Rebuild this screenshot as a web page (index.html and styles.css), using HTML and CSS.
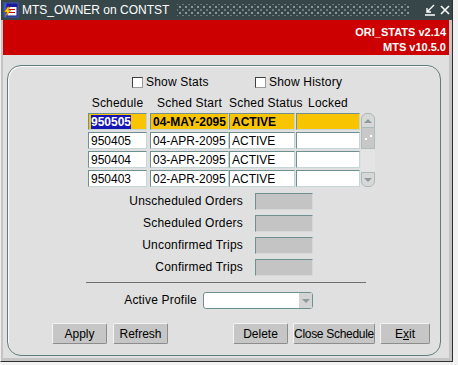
FILE: index.html
```html
<!DOCTYPE html>
<html>
<head>
<meta charset="utf-8">
<link rel="stylesheet" href="styles.css">
</head>
<body>

<div class="window">
  <!-- title bar -->
  <div class="titlebar">
    <svg class="app-icon" width="16" height="16" viewBox="0 0 16 16">
      <rect x="0.5" y="0.5" width="15" height="15" fill="#3b59c8"/>
      <rect x="4" y="2" width="10" height="12" fill="#f4f4f4" stroke="#1a1a80" stroke-width="1"/>
      <rect x="4" y="2" width="10" height="3" fill="#1a1a9a"/>
      <line x1="6" y1="7.5" x2="12" y2="7.5" stroke="#c00000"/>
      <line x1="6" y1="10.5" x2="12" y2="10.5" stroke="#c00000"/>
      <polygon points="5,5 1,10 4,10 2,15 8,8 5,8 7,5" fill="#ffd800" stroke="#b05000" stroke-width="0.6"/>
    </svg>
    <span class="title">MTS_OWNER on CONTST</span>
    <div class="grip"></div>
    <svg class="tb-btn" width="10" height="12" viewBox="0 0 10 12">
      <path d="M9 1 L2 8 M2 4 L2 8 L6 8 M0 11 L10 11" stroke="#fff" stroke-width="1.4" fill="none"/>
    </svg>
    <svg class="tb-btn" width="10" height="10" viewBox="0 0 10 10">
      <path d="M1 1 L9 9 M9 1 L1 9" stroke="#fff" stroke-width="1.6" fill="none"/>
    </svg>
  </div>

  <!-- red banner -->
  <div class="banner">
    <div>ORI_STATS v2.14</div>
    <div>MTS v10.5.0</div>
  </div>

  <div class="content">
    <div class="panel">

      <div class="checks">
        <label class="check first"><span class="box"></span>Show Stats</label>
        <label class="check"><span class="box"></span>Show History</label>
      </div>

      <div class="grid-head">
        <div class="c1">Schedule</div>
        <div class="c2">Sched Start</div>
        <div class="c3">Sched Status</div>
        <div class="c4">Locked</div>
      </div>

      <div class="grid">
        <div class="rows">
          <div class="row current">
            <div class="cell c1"><span class="sel">950505</span></div>
            <div class="cell c2">04-MAY-2095</div>
            <div class="cell c3">ACTIVE</div>
            <div class="cell c4"></div>
          </div>
          <div class="row">
            <div class="cell c1">950405</div>
            <div class="cell c2">04-APR-2095</div>
            <div class="cell c3">ACTIVE</div>
            <div class="cell c4"></div>
          </div>
          <div class="row">
            <div class="cell c1">950404</div>
            <div class="cell c2">03-APR-2095</div>
            <div class="cell c3">ACTIVE</div>
            <div class="cell c4"></div>
          </div>
          <div class="row">
            <div class="cell c1">950403</div>
            <div class="cell c2">02-APR-2095</div>
            <div class="cell c3">ACTIVE</div>
            <div class="cell c4"></div>
          </div>
        </div>
        <div class="scrollbar">
          <div class="sb-btn up"><span class="tri-up"></span></div>
          <div class="sb-thumb"><span class="dot"></span><span class="dot"></span></div>
          <div class="sb-track"></div>
          <div class="sb-btn down"><span class="tri-down"></span></div>
        </div>
      </div>

      <div class="stats">
        <div class="lbl">Unscheduled Orders</div><div class="ro-field"></div>
        <div class="lbl">Scheduled Orders</div><div class="ro-field"></div>
        <div class="lbl">Unconfirmed Trips</div><div class="ro-field"></div>
        <div class="lbl">Confirmed Trips</div><div class="ro-field"></div>
      </div>

      <div class="sep"></div>

      <div class="profile">
        <div class="lbl">Active Profile</div>
        <div class="combo"><span class="combo-arrow"><span class="tri-down"></span></span></div>
      </div>

      <div class="buttons">
        <button class="btn w55">Apply</button>
        <button class="btn w55 gap6">Refresh</button>
        <button class="btn w55 far">Delete</button>
        <button class="btn w82 gap5">Close Schedule</button>
        <button class="btn w50 gap5">E<u>x</u>it</button>
      </div>

    </div>
  </div>
</div>

</body>
</html>
```

FILE: styles.css
```css
body {
  margin: 0;
  background-color: #f2f2f2;
  font-family: "Liberation Sans", Arial, sans-serif;
  font-size: 12px;
  color: #000;
}

.window {
  width: 453px;
  height: 362px;
  box-sizing: border-box;
  background-color: #c4c4c4;
  border-left: 1px solid #eeeeee;
  border-right: 1px solid #303030;
  border-bottom: 1px solid #303030;
  display: flex;
  flex-direction: column;
}

/* title bar */
.titlebar {
  height: 20px;
  flex: none;
  background-color: #374749;
  display: flex;
  align-items: center;
  padding: 0 2px 0 2px;
  color: #fff;
}

.app-icon {
  flex: none;
}

.title {
  margin-left: 3px;
  font-size: 12px;
  white-space: nowrap;
}

.grip {
  flex: 1;
  height: 12px;
  margin: 0 10px 0 8px;
  background-image:
    radial-gradient(circle, #8c9a9a 0.7px, transparent 1px),
    radial-gradient(circle, #6e7e7e 0.7px, transparent 1px);
  background-size: 6px 6px, 6px 6px;
  background-position: 0 0, 3px 3px;
}

.tb-btn {
  flex: none;
  margin-left: 5px;
}

/* red banner */
.banner {
  height: 35px;
  flex: none;
  box-sizing: border-box;
  margin: 0 3px 0 2px;
  padding: 5px 3px 0 0;
  background-color: #cc0000;
  color: #fff;
  font-weight: bold;
  font-size: 11px;
  line-height: 15px;
  text-align: right;
}

.content {
  flex: 1;
  margin: 0 3px 3px 2px;
  padding: 10px 8px 2px 4px;
  background-color: #e0e0e0;
  display: flex;
}

.panel {
  flex: 1;
  border: 1px solid #5f7d7d;
  border-radius: 14px;
  box-shadow: inset 1px 1px 0 #fafafa;
  letter-spacing: 0.2px;
}

/* checkboxes */
.checks {
  margin-top: 9px;
  height: 14px;
  padding-left: 124px;
  display: flex;
}

.check {
  display: flex;
  align-items: center;
  gap: 3px;
  line-height: 14px;
}

.check.first {
  width: 123px;
}

.box {
  width: 11px;
  height: 11px;
  box-sizing: border-box;
  background-color: #fff;
  border: 1px solid #9a9a9a;
  border-top-color: #404040;
  border-left-color: #404040;
}

/* multi-record block */
.grid-head {
  margin-top: 7px;
  padding-left: 80px;
  display: flex;
  line-height: 14px;
  height: 14px;
}

.grid-head > div {
  text-align: center;
  white-space: nowrap;
}

.c1 { width: 59px; margin-right: 3px; }
.c2 { width: 79px; }
.c3 { width: 66px; margin-right: 1px; }
.c4 { width: 64px; margin-right: 1px; }

.grid {
  margin-top: 3px;
  padding-left: 80px;
  display: flex;
}

.rows {
  display: flex;
  flex-direction: column;
  gap: 2px;
}

.row {
  display: flex;
  height: 17px;
}

.cell {
  box-sizing: border-box;
  height: 17px;
  background-color: #fff;
  border: 1px solid #c6d6d6;
  border-top-color: #6e9090;
  border-left-color: #6e9090;
  padding: 1px 0 0 2px;
  line-height: 14px;
  letter-spacing: 0;
  white-space: nowrap;
  overflow: hidden;
}

.row.current .cell {
  background-color: #f8c400;
  font-weight: bold;
}

.sel {
  background-color: #1515b5;
  color: #fff;
}

.scrollbar {
  width: 14px;
  height: 74px;
  display: flex;
  flex-direction: column;
}

.sb-btn {
  height: 15px;
  box-sizing: border-box;
  background-color: #d8d8d8;
  border: 1px solid #a8b8b8;
  display: flex;
  align-items: center;
  justify-content: center;
}

.sb-btn.up {
  border-radius: 6px 6px 0 0;
}

.sb-btn.down {
  border-radius: 0 0 6px 6px;
}

.tri-up {
  width: 0;
  height: 0;
  border-left: 4px solid transparent;
  border-right: 4px solid transparent;
  border-bottom: 4px solid #8c9a9a;
}

.tri-down {
  width: 0;
  height: 0;
  border-left: 4px solid transparent;
  border-right: 4px solid transparent;
  border-top: 4px solid #8c9a9a;
}

.sb-thumb {
  height: 21px;
  box-sizing: border-box;
  background-color: #c8c8c8;
  border: 1px solid #b0bcbc;
  border-top: 0;
  position: relative;
}

.dot {
  position: absolute;
  width: 2px;
  height: 2px;
  background-color: #fff;
}

.dot:first-child { left: 3px; top: 10px; }
.dot:last-child { left: 8px; top: 7px; }

.sb-track {
  flex: 1;
  background-color: #e4e4e4;
}

/* read-only stats */
.stats {
  margin-top: 6px;
  display: grid;
  grid-template-columns: 235px 58px;
  column-gap: 12px;
  row-gap: 5px;
}

.lbl {
  text-align: right;
  line-height: 17px;
  white-space: nowrap;
}

.ro-field {
  height: 17px;
  box-sizing: border-box;
  background-color: #c4c4c4;
  border: 1px solid #d8d8d8;
  border-top-color: #6e9090;
  border-left-color: #6e9090;
}

.sep {
  margin: 6px 0 0 78px;
  width: 280px;
  height: 1px;
  background-color: #707070;
}

.profile {
  margin-top: 9px;
  display: grid;
  grid-template-columns: 189px 110px;
  column-gap: 6px;
}

.combo {
  height: 17px;
  box-sizing: border-box;
  background-color: #fff;
  border: 1px solid #6e9090;
  border-radius: 3px;
  display: flex;
  justify-content: flex-end;
}

.combo-arrow {
  width: 13px;
  background-color: #d4d4d4;
  display: flex;
  align-items: center;
  justify-content: center;
}

/* buttons */
.buttons {
  margin-top: 14px;
  padding-left: 44px;
  display: flex;
}

.btn {
  height: 21px;
  padding: 0;
  white-space: nowrap;
  font-family: "Liberation Sans", Arial, sans-serif;
  font-size: 12px;
  letter-spacing: 0;
  color: #000;
  background-color: #c6c6c6;
  border: 1px solid #8c8c8c;
  border-top-color: #f4f4f4;
  border-left-color: #f4f4f4;
  border-radius: 2px;
}

.btn u {
  text-decoration-thickness: 1px;
}

.w55 { width: 55px; }
.w82 { width: 82px; letter-spacing: -0.3px; }
.w50 { width: 50px; }
.gap6 { margin-left: 6px; }
.gap5 { margin-left: 5px; }
.far { margin-left: 65px; }
```
